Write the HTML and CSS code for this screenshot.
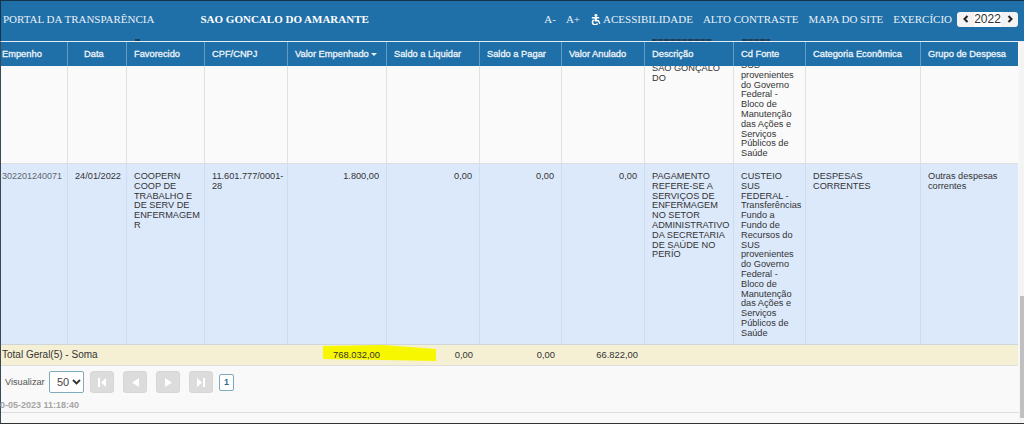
FILE: index.html
```html
<!DOCTYPE html>
<html lang="pt-BR">
<head>
    <meta charset="UTF-8">
    <meta name="viewport" content="width=device-width, initial-scale=1.0">
    <title>Portal da Transparência</title>
    <link rel="stylesheet" href="styles.css">
</head>
<body>
<div class="page">
    <header class="topbar">
        <div class="brand">
            <span>PORTAL DA TRANSPARÊNCIA</span>
            <strong>SAO GONCALO DO AMARANTE</strong>
        </div>
        <nav class="tools">
            <a>A-</a>
            <a>A+</a>
            <a class="a11y">
                <svg width="11" height="11" viewBox="0 0 12 12"><circle cx="6.5" cy="1.6" r="1.6" fill="#fff"/><path d="M2 3.400h8V5H7.600v1.600h2.200l1.600 3.800-1.400.5-1.200-2.800H5V5H2z" fill="#fff"/><path d="M4.200 6.400a2.900 2.900 0 1 0 4 3.800" fill="none" stroke="#fff" stroke-width="1.700"/></svg>
                ACESSIBILIDADE
            </a>
            <a>ALTO CONTRASTE</a>
            <a>MAPA DO SITE</a>
            <a>EXERCÍCIO</a>
            <div class="stepper">
                <button class="step">
                    <svg width="6" height="8" viewBox="0 0 6 8"><path d="M4.500 1 1.500 4l3 3" fill="none" stroke="#222" stroke-width="2"/></svg>
                </button>
                <span class="year">2022</span>
                <button class="step">
                    <svg width="6" height="8" viewBox="0 0 6 8"><path d="M1.500 1l3 3-3 3" fill="none" stroke="#222" stroke-width="2"/></svg>
                </button>
            </div>
        </nav>
        <span class="sliver sliver-fav"></span>
        <span class="sliver sliver-desc"></span>
        <span class="sliver sliver-fonte"></span>
    </header>

    <div class="content">
        <main class="main">
            <table class="grid">
                <colgroup>
                    <col class="c-emp"><col class="c-data"><col class="c-fav"><col class="c-cpf">
                    <col class="c-val"><col class="c-liq"><col class="c-pag"><col class="c-anu">
                    <col class="c-desc"><col class="c-fonte"><col class="c-cat"><col class="c-grupo">
                </colgroup>
                <thead>
                    <tr>
                        <th class="first">Empenho</th>
                        <th class="th-data">Data</th>
                        <th>Favorecido</th>
                        <th>CPF/CNPJ</th>
                        <th>Valor Empenhado<span class="caret"></span></th>
                        <th>Saldo a Liquidar</th>
                        <th>Saldo a Pagar</th>
                        <th>Valor Anulado</th>
                        <th>Descrição</th>
                        <th>Cd Fonte</th>
                        <th>Categoria Econômica</th>
                        <th>Grupo de Despesa</th>
                    </tr>
                </thead>
                <tbody>
                    <tr class="row-cut">
                        <td></td><td></td><td></td><td></td><td></td><td></td><td></td><td></td>
                        <td><div class="clip"><div class="tail-desc">SAO GONÇALO DO</div></div></td>
                        <td><div class="clip"><div class="tail-fonte">SUS provenientes do Governo Federal - Bloco de Manutenção das Ações e Serviços Públicos de Saúde</div></div></td>
                        <td></td><td></td>
                    </tr>
                    <tr class="row-sel">
                        <td class="first id">302201240071</td>
                        <td>24/01/2022</td>
                        <td>COOPERN COOP DE TRABALHO E DE SERV DE ENFERMAGEM R</td>
                        <td>11.601.777/0001-28</td>
                        <td class="num">1.800,00</td>
                        <td class="num">0,00</td>
                        <td class="num">0,00</td>
                        <td class="num">0,00</td>
                        <td>PAGAMENTO REFERE-SE A SERVIÇOS DE ENFERMAGEM NO SETOR ADMINISTRATIVO DA SECRETARIA DE SAÚDE NO PERÍO</td>
                        <td>CUSTEIO SUS FEDERAL - Transferências Fundo a Fundo de Recursos do SUS provenientes do Governo Federal - Bloco de Manutenção das Ações e Serviços Públicos de Saúde</td>
                        <td>DESPESAS CORRENTES</td>
                        <td>Outras despesas correntes</td>
                    </tr>
                </tbody>
                <tfoot>
                    <tr>
                        <td class="first total-label" colspan="4">Total Geral(5) - Soma</td>
                        <td class="num marked">
                            <svg class="marker" width="114" height="16" viewBox="0 0 114 16"><path d="M0 1 60 0l53 4v12L60 15 0 14z" fill="#f7f700"/></svg>
                            <span class="marked-text">768.032,00</span>
                        </td>
                        <td class="num">0,00</td>
                        <td class="num">0,00</td>
                        <td class="num">66.822,00</td>
                        <td colspan="4"></td>
                    </tr>
                </tfoot>
            </table>

            <section class="pager">
                <div class="pager-row">
                    <label class="pager-label">Visualizar</label>
                    <div class="size-wrap">
                        <select class="size"><option>50</option></select>
                        <svg class="size-arrow" width="9" height="6" viewBox="0 0 9 6"><path d="M1 1l3.500 3.500L8 1" fill="none" stroke="#333" stroke-width="1.800"/></svg>
                    </div>
                    <button class="nav-btn">
                        <svg width="8" height="9" viewBox="0 0 8 9"><path d="M0 0h2v9H0zM8 0v9L3 4.500z" fill="#fff"/></svg>
                    </button>
                    <button class="nav-btn">
                        <svg width="7" height="9" viewBox="0 0 7 9"><path d="M7 0v9L0 4.500z" fill="#fff"/></svg>
                    </button>
                    <button class="nav-btn">
                        <svg width="7" height="9" viewBox="0 0 7 9"><path d="M0 0v9l7-4.500z" fill="#fff"/></svg>
                    </button>
                    <button class="nav-btn">
                        <svg width="8" height="9" viewBox="0 0 8 9"><path d="M0 0v9l5-4.500zM6 0h2v9H6z" fill="#fff"/></svg>
                    </button>
                    <span class="page-num">1</span>
                </div>
                <div class="stamp">20-05-2023 11:18:40</div>
            </section>
        </main>
        <aside class="scrollbar"><div class="thumb"></div></aside>
    </div>
</div>
</body>
</html>
```

FILE: styles.css
```css
html, body {
    margin: 0;
    padding: 0;
    height: 424px;
    overflow: hidden;
    background: #fff;
}
.page {
    height: 424px;
    box-sizing: border-box;
    border-bottom: 1px solid #333;
    display: flex;
    flex-direction: column;
    font-family: "Liberation Sans", Arial, sans-serif;
    font-size: 9.2px;
    color: #333;
}

/* top bar */
.topbar {
    position: relative;
    flex: none;
    height: 42px;
    box-sizing: border-box;
    border-top: 1px solid #16324a;
    border-left: 1px solid #16324a;
    border-bottom: 1px solid #e4eef5;
    background: #1f6fa8;
    color: #e8f1f7;
    font-family: "Liberation Serif", "Times New Roman", serif;
    font-size: 11px;
    display: flex;
    align-items: center;
    justify-content: space-between;
    padding: 0 6px 4px 2px;
}
.brand {
    display: flex;
    gap: 46px;
    white-space: nowrap;
}
.brand strong {
    color: #fff;
}
.tools {
    display: flex;
    align-items: center;
    gap: 10px;
    white-space: nowrap;
}
.a11y {
    display: flex;
    align-items: center;
    gap: 2px;
}
.stepper {
    display: flex;
    align-items: stretch;
    height: 15px;
    margin-left: -5px;
    background: #f3f3f3;
    border-radius: 3px;
}
.step {
    width: 17px;
    padding: 0;
    border: none;
    background: none;
    display: flex;
    align-items: center;
    justify-content: center;
}
.year {
    width: 27px;
    background: #fff;
    color: #333;
    text-align: center;
    font-family: "Liberation Sans", Arial, sans-serif;
    font-size: 12px;
    line-height: 15px;
}
.sliver {
    position: absolute;
    bottom: 0;
    height: 2px;
    background: repeating-linear-gradient(to right, #1d4058 0 5px, #1f5f8e 5px 6px);
}
.sliver-fav { left: 134px; width: 5px; }
.sliver-desc { left: 651px; width: 60px; }
.sliver-fonte { left: 741px; width: 28px; }

/* table */
.content {
    flex: 1;
    display: flex;
    min-height: 0;
}
.main {
    flex: none;
    width: 1019px;
    box-sizing: border-box;
    border-left: 1px solid #3a4a55;
    background: #f9f9f9;
}
.grid {
    width: 1017px;
    table-layout: fixed;
    border-collapse: separate;
    border-spacing: 0;
}
.c-emp { width: 67px; }
.c-data { width: 59px; }
.c-fav { width: 78px; }
.c-cpf { width: 83px; }
.c-val { width: 99px; }
.c-liq { width: 93px; }
.c-pag { width: 82px; }
.c-anu { width: 83px; }
.c-desc { width: 89px; }
.c-fonte { width: 72px; }
.c-cat { width: 115px; }
.c-grupo { width: 97px; }

.grid th {
    height: 24px;
    box-sizing: border-box;
    padding: 0 0 0 7px;
    background: #1f6fa8;
    border-right: 1px solid #5f9ec9;
    color: #eef5fa;
    font-size: 9.3px;
    font-weight: normal;
    text-align: left;
    white-space: nowrap;
    -webkit-text-stroke: 0.3px #eef5fa;
}
.grid th:last-child {
    border-right: none;
}
.grid .first {
    padding-left: 1px;
}
.grid .th-data {
    padding-left: 16px;
}
.caret {
    display: inline-block;
    margin-left: 2px;
    vertical-align: middle;
    border-left: 3.5px solid transparent;
    border-right: 3.5px solid transparent;
    border-top: 3.5px solid #eef5fa;
}
.grid td {
    padding: 8px 3px 4px 7px;
    vertical-align: top;
    line-height: 9.8px;
    border-right: 1px solid #e1e1e1;
    border-bottom: 1px solid #dedede;
    word-break: break-word;
}
.grid td:last-child {
    border-right: none;
}
.grid td.num {
    padding-right: 7px;
    text-align: right;
}
.row-cut td {
    height: 98px;
    box-sizing: border-box;
    padding: 0 3px 0 7px;
    background: #fafafa;
}
.clip {
    height: 97px;
    overflow: hidden;
    display: flex;
    flex-direction: column;
    justify-content: flex-end;
}
.tail-desc {
    padding-bottom: 79px;
}
.tail-fonte {
    padding-bottom: 4px;
}
.row-sel td {
    height: 181px;
    box-sizing: border-box;
    background: #dce9fb;
    border-right-color: #cfdced;
    border-bottom-color: #cfd6d8;
}
.grid td.id {
    padding-left: 1px;
    color: #5d6670;
    font-size: 9px;
    white-space: nowrap;
    overflow: hidden;
}
.grid tfoot td {
    height: 21px;
    box-sizing: border-box;
    padding-top: 0;
    padding-bottom: 0;
    vertical-align: middle;
    background: #f5f0d3;
    border-right: none;
    border-bottom: 1px solid #dedede;
    font-size: 9.4px;
}
.grid tfoot td.total-label {
    font-size: 10px;
}
.grid td.marked {
    position: relative;
}
.marker {
    position: absolute;
    left: 35px;
    top: 0;
}
.marked-text {
    position: relative;
}

/* pager */
.pager-row {
    display: flex;
    align-items: center;
    height: 22px;
    padding: 5px 0 0 4px;
}
.pager-label {
    width: 44px;
    color: #555;
}
.size-wrap {
    position: relative;
    margin-right: 6px;
}
.size {
    display: block;
    width: 35px;
    height: 22px;
    padding: 0 0 0 7px;
    appearance: none;
    background: #fff;
    border: 1px solid #7fa9bd;
    border-radius: 2px;
    color: #444;
    font-family: "Liberation Sans", Arial, sans-serif;
    font-size: 11px;
}
.size-arrow {
    position: absolute;
    right: 3px;
    top: 8px;
}
.nav-btn {
    width: 24px;
    height: 22px;
    margin-right: 9px;
    padding: 0;
    background: #dcdcdc;
    border: 1px solid #d6d6d6;
    border-radius: 3px;
    display: flex;
    align-items: center;
    justify-content: center;
}
.page-num {
    width: 13px;
    height: 15px;
    margin-left: -3px;
    background: #fff;
    border: 1px solid #7fa9bd;
    border-radius: 2px;
    color: #2f6f8f;
    font-size: 9px;
    font-weight: bold;
    line-height: 15px;
    text-align: center;
}
.pager {
    height: 47px;
    box-sizing: border-box;
    border-bottom: 1px solid #dcdcdc;
}
.stamp {
    margin: 7px 0 0 -6px;
    color: #a5a5a5;
    font-weight: bold;
    font-size: 9px;
}

/* scrollbar */
.scrollbar {
    flex: 1;
    background: #f4f4f4;
    display: flex;
    flex-direction: column;
    justify-content: flex-end;
    padding-left: 1px;
}
.thumb {
    height: 122px;
    margin-bottom: 5px;
    background: #c0c0c0;
}
```
